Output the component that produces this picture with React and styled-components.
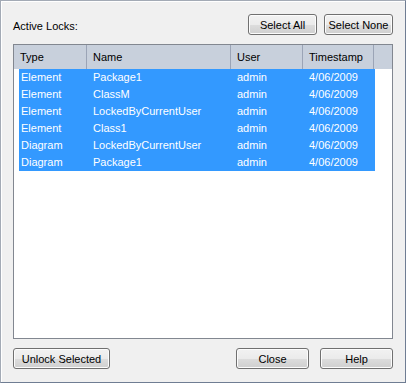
import React from "react";
import styled, { createGlobalStyle } from "styled-components";

const Global = createGlobalStyle`
  html, body { margin: 0; padding: 0; background: #f0f0f0; }
  body { font-family: "Liberation Sans", Arial, sans-serif; font-size: 11px; color: #000; }
  * { box-sizing: border-box; }
`;

const Frame = styled.div`
  width: 406px;
  height: 383px;
  display: flex;
  flex-direction: column;
  padding: 13px 12px 13px 12px;
  background: #f0f0f0;
  border: 1px solid;
  border-color: #a3aab5 #6f7d93 #6f7d93 #a3aab5;
  box-shadow: inset 1px 1px 0 #ffffff;
`;

const TopBar = styled.div`
  display: flex;
  align-items: flex-end;
  height: 21px;
  gap: 7px;
`;

const Label = styled.div`
  flex: 1;
  line-height: 13px;
  margin-bottom: 2px;
`;

const Button = styled.button`
  width: ${(p) => p.$w}px;
  height: 21px;
  padding: 0;
  margin: 0;
  font-family: "Liberation Sans", Arial, sans-serif;
  font-size: 11px;
  color: #000;
  border: 1px solid #707070;
  border-radius: 3px;
  background: linear-gradient(#f2f2f2 0%, #ebebeb 50%, #dddddd 50%, #cfcfcf 100%);
  box-shadow: inset 0 0 0 1px #fcfcfc;
  cursor: default;
  line-height: 18px;
`;

const List = styled.div`
  flex: 1;
  margin-top: 9px;
  border: 1px solid #828790;
  background: #fff;
  overflow: hidden;
`;

const Header = styled.div`
  display: flex;
  height: 24px;
  background: #c8d0dc;
`;

const HeadCell = styled.div`
  width: ${(p) => p.$w}px;
  flex: ${(p) => (p.$fill ? 1 : "none")};
  padding-left: 6px;
  line-height: 24px;
  border-right: ${(p) => (p.$fill ? "none" : "1px solid #9ba4b6")};
  white-space: nowrap;
`;

const Row = styled.div`
  display: grid;
  grid-template-columns: 68px 144px 72px 72px;
  margin-left: 5px;
  width: 356px;
  height: 17px;
  background: ${(p) => (p.$selected ? "#3399ff" : "transparent")};
  color: ${(p) => (p.$selected ? "#fff" : "#000")};
`;

const Cell = styled.div`
  padding-left: ${(p) => (p.$first ? 2 : 6)}px;
  line-height: 17px;
  white-space: nowrap;
  overflow: hidden;
`;

const BottomBar = styled.div`
  display: flex;
  margin-top: 9px;
  height: 21px;
  gap: 11px;
`;

const Spacer = styled.div`
  flex: 1;
`;

const rows = [
  ["Element", "Package1", "admin", "4/06/2009"],
  ["Element", "ClassM", "admin", "4/06/2009"],
  ["Element", "LockedByCurrentUser", "admin", "4/06/2009"],
  ["Element", "Class1", "admin", "4/06/2009"],
  ["Diagram", "LockedByCurrentUser", "admin", "4/06/2009"],
  ["Diagram", "Package1", "admin", "4/06/2009"],
];

export default function App() {
  return (
    <>
      <Global />
      <Frame>
        <TopBar>
          <Label>Active Locks:</Label>
          <Button $w={69}>Select All</Button>
          <Button $w={69}>Select None</Button>
        </TopBar>
        <List>
          <Header>
            <HeadCell $w={73}>Type</HeadCell>
            <HeadCell $w={144}>Name</HeadCell>
            <HeadCell $w={72}>User</HeadCell>
            <HeadCell $w={71}>Timestamp</HeadCell>
            <HeadCell $fill />
          </Header>
          {rows.map((r, i) => (
            <Row key={i} $selected>
              {r.map((c, j) => (
                <Cell key={j} $first={j === 0}>
                  {c}
                </Cell>
              ))}
            </Row>
          ))}
        </List>
        <BottomBar>
          <Button $w={97}>Unlock Selected</Button>
          <Spacer />
          <Button $w={73}>Close</Button>
          <Button $w={73}>Help</Button>
        </BottomBar>
      </Frame>
    </>
  );
}
